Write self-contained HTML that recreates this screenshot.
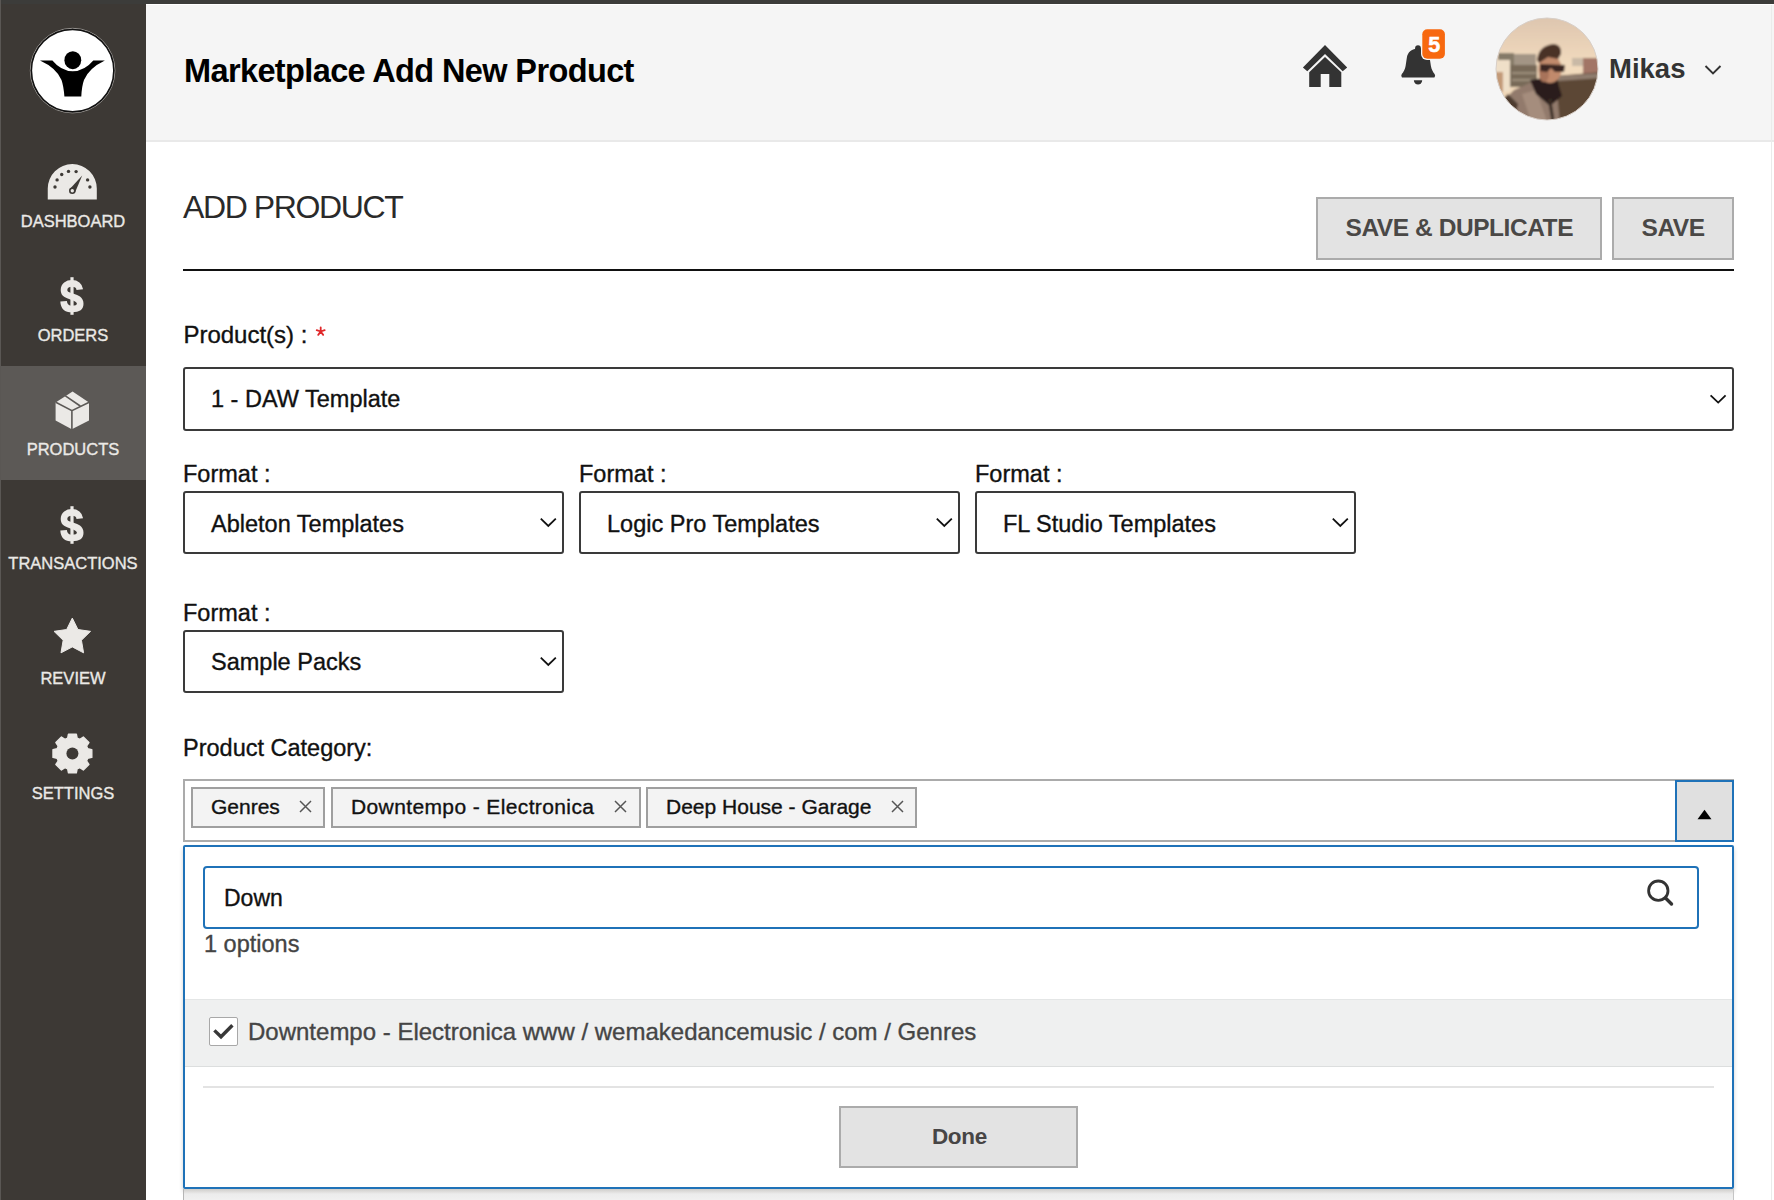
<!DOCTYPE html>
<html><head><meta charset="utf-8">
<style>
*{box-sizing:border-box;margin:0;padding:0}
html,body{width:1774px;height:1200px;overflow:hidden;background:#fff;font-family:"Liberation Sans",sans-serif;position:relative}
.a{position:absolute}
.t{position:absolute;white-space:nowrap;line-height:1;-webkit-text-stroke:0.35px currentColor}
#topbar{left:0;top:0;width:1774px;height:4px;background:#3c3c3a}
#side{left:0;top:4px;width:146px;height:1196px;background:#3d3935}
#sedge{left:0;top:0;width:1px;height:1200px;background:#5a5754}
#active{left:1px;top:366px;width:145px;height:114px;background:#5c5956}
#head{left:146px;top:5px;width:1628px;height:137px;background:#f5f5f5;border-bottom:2px solid #e9e9e9}
#redge{left:1771px;top:5px;width:1px;height:1195px;background:#ebebeb}
.nav{color:#ebe9e6;font-size:16.5px;left:0;width:146px;text-align:center}
.lbl{font-size:23.5px;color:#111}
.sel{border:2px solid #3a3a3a;border-radius:3px;background:#fff}
.btn{background:#e3e3e3;border:2px solid #ababab}
.btxt{-webkit-text-stroke:0 !important;font-weight:700;color:#4a4846;font-size:24.5px;letter-spacing:-0.44px}
.tag{background:#f3f3f3;border:2px solid #9f9f9f;top:787px;height:41px}
.tagt{font-size:21px;color:#111;top:795.8px}
.x{font-size:20px;color:#444}
</style></head>
<body>
<div id="topbar" class="a"></div>
<div id="side" class="a"></div>
<div id="sedge" class="a"></div>
<div id="active" class="a"></div>
<div id="head" class="a"></div>
<div id="redge" class="a"></div>

<!-- logo -->
<svg class="a" style="left:28px;top:26px" width="90" height="90" viewBox="0 0 90 90">
  <circle cx="44.6" cy="44.6" r="42.3" fill="none" stroke="#9a9794" stroke-width="1"/><circle cx="44.6" cy="44.6" r="41.2" fill="#fff" stroke="#111" stroke-width="1.5"/>
  <ellipse cx="44.8" cy="34.2" rx="8.4" ry="9" fill="#000"/>
  <path d="M12,34.5 L24.4,34.5 Q33,45 44.8,45.3 Q56.5,45 65.3,34.5 L76.9,34.5 Q61,42 56,54 Q53.8,60 53.3,70.5 L36.4,70.5 Q35.6,60 33.5,54 Q28.5,42 12,34.5 Z" fill="#000"/>
</svg>

<!-- nav labels -->
<div class="t nav" style="top:213px">DASHBOARD</div>
<div class="t nav" style="top:327px">ORDERS</div>
<div class="t nav" style="top:441px">PRODUCTS</div>
<div class="t nav" style="top:555px">TRANSACTIONS</div>
<div class="t nav" style="top:669.5px">REVIEW</div>
<div class="t nav" style="top:784.5px">SETTINGS</div>

<!-- header -->
<div class="t" style="left:184px;top:55.3px;font-size:32.5px;font-weight:700;letter-spacing:-0.62px;color:#000;-webkit-text-stroke:0">Marketplace Add New Product</div>
<div class="t" style="left:1609px;top:54.7px;font-size:27.5px;font-weight:700;color:#333;-webkit-text-stroke:0">Mikas</div>

<!-- page title -->
<div class="t" style="left:183px;top:190.8px;font-size:32px;letter-spacing:-1.4px;color:#2a2a2a;-webkit-text-stroke:0">ADD PRODUCT</div>
<div class="a" style="left:183px;top:269px;width:1551px;height:2px;background:#111"></div>

<div class="a btn" style="left:1316px;top:197px;width:286px;height:63px"></div>
<div class="t btxt" style="left:1345.5px;top:216.2px">SAVE &amp; DUPLICATE</div>
<div class="a btn" style="left:1612px;top:197px;width:122px;height:63px"></div>
<div class="t btxt" style="left:1641.5px;top:216.2px">SAVE</div>

<!-- products select -->
<div class="t lbl" style="left:183.4px;top:323px;font-size:24px">Product(s) :</div>
<div class="a sel" style="left:183px;top:367px;width:1551px;height:64px"></div>
<div class="t lbl" style="left:211px;top:388.3px">1 - DAW Template</div>

<!-- format row 1 -->
<div class="t lbl" style="left:183px;top:463.4px">Format :</div>
<div class="t lbl" style="left:579px;top:463.4px">Format :</div>
<div class="t lbl" style="left:975px;top:463.4px">Format :</div>
<div class="a sel" style="left:183px;top:491px;width:381px;height:63px"></div>
<div class="a sel" style="left:579px;top:491px;width:381px;height:63px"></div>
<div class="a sel" style="left:975px;top:491px;width:381px;height:63px"></div>
<div class="t lbl" style="left:211px;top:512.5px">Ableton Templates</div>
<div class="t lbl" style="left:607px;top:512.5px">Logic Pro Templates</div>
<div class="t lbl" style="left:1003px;top:512.5px">FL Studio Templates</div>

<!-- format row 2 -->
<div class="t lbl" style="left:183px;top:602px">Format :</div>
<div class="a sel" style="left:183px;top:630px;width:381px;height:63px"></div>
<div class="t lbl" style="left:211px;top:651.3px">Sample Packs</div>

<!-- category -->
<div class="t lbl" style="left:183px;top:737.3px">Product Category:</div>
<div class="a" style="left:183px;top:779px;width:1551px;height:63px;border:2px solid #ababab;background:#fff"></div>
<div class="a tag" style="left:190.5px;width:134px"></div>
<div class="t tagt" style="left:211px">Genres</div>
<div class="a tag" style="left:330.5px;width:310px"></div>
<div class="t tagt" style="left:351px;letter-spacing:0.38px">Downtempo - Electronica</div>
<div class="a tag" style="left:646px;width:270.5px"></div>
<div class="t tagt" style="left:666px">Deep House - Garage</div>
<svg class="a" style="left:299px;top:800px" width="13" height="13" viewBox="0 0 13 13"><path d="M1,1 L12,12 M12,1 L1,12" stroke="#555" stroke-width="1.45"/></svg>
<svg class="a" style="left:614px;top:800px" width="13" height="13" viewBox="0 0 13 13"><path d="M1,1 L12,12 M12,1 L1,12" stroke="#555" stroke-width="1.45"/></svg>
<svg class="a" style="left:891px;top:800px" width="13" height="13" viewBox="0 0 13 13"><path d="M1,1 L12,12 M12,1 L1,12" stroke="#555" stroke-width="1.45"/></svg>
<div class="a" style="left:1675px;top:779.5px;width:59px;height:62px;background:#e0e0e0;border:2px solid #1f72b8"></div>
<svg class="a" style="left:1696px;top:808px" width="17" height="12" viewBox="0 0 17 12"><path d="M1.5,11.2 L8.5,1.7 L15.5,11.2 Z" fill="#000"/></svg>

<!-- dropdown panel -->
<div class="a" style="left:183px;top:845px;width:1551px;height:344px;border:2px solid #1f72b8;border-radius:2px;background:#fff;box-shadow:0 3px 4px rgba(0,0,0,0.18)"></div>
<div class="a" style="left:203px;top:866px;width:1496px;height:63px;border:2px solid #1f72b8;border-radius:4px;background:#fff"></div>
<div class="t" style="left:224px;top:887px;font-size:23px;color:#111">Down</div>
<svg class="a" style="left:1640px;top:873px" width="40" height="40" viewBox="0 0 40 40"><circle cx="18.3" cy="17.7" r="9.7" fill="none" stroke="#333" stroke-width="2.8"/><path d="M25.5,25 L31.5,31" stroke="#333" stroke-width="3.4" stroke-linecap="round"/></svg>
<div class="t" style="left:204px;top:933.1px;font-size:23.5px;color:#444">1 options</div>
<div class="a" style="left:185px;top:999px;width:1547px;height:68px;background:#eff0f0;border-top:1px solid #e4e6e6;border-bottom:1px solid #dcdede"></div>
<div class="a" style="left:208.5px;top:1017px;width:29px;height:29px;background:#fff;border:1.5px solid #a8a8a8;border-radius:2px"></div>
<svg class="a" style="left:208px;top:1017px" width="30" height="30" viewBox="0 0 30 30"><path d="M6.4,13.4 L13,19.8 L24.4,8.2" fill="none" stroke="#383838" stroke-width="3.4"/></svg>
<div class="t" style="left:248px;top:1020px;font-size:24px;color:#454545">Downtempo - Electronica www / wemakedancemusic / com / Genres</div>
<div class="a" style="left:203px;top:1086px;width:1511px;height:2px;background:#e3e3e3"></div>
<div class="a btn" style="left:839px;top:1106px;width:239px;height:62px"></div>
<div class="t btxt" style="left:931.9px;top:1125.8px;font-size:22.5px;letter-spacing:-0.3px;color:#474545;-webkit-text-stroke:0.3px #474545">Done</div>

<!-- below panel -->
<div class="a" style="left:183px;top:1189px;width:1551px;height:11px;border-left:1.5px solid #b5b5b5;border-right:1.5px solid #c5c5c5;background:linear-gradient(#cfcdca,#ececec 5px,#f0f0f0)"></div>

<!-- icons overlay -->
<svg class="a" style="left:0;top:0" width="1774" height="1200" viewBox="0 0 1774 1200">
  <!-- dashboard gauge -->
  <g transform="translate(42,158)">
    <path d="M5.75,41.4 L5.75,30.6 A24.52,24.52 0 0 1 54.8,30.6 L54.8,41.4 Z" fill="#ebe9e6"/>
    <g fill="#3d3935">
      <circle cx="13" cy="29" r="1.7"/><circle cx="15.1" cy="21.9" r="1.7"/><circle cx="19.7" cy="16.5" r="1.7"/>
      <circle cx="26.5" cy="13.4" r="1.7"/><circle cx="34.1" cy="13.6" r="1.7"/><circle cx="45.6" cy="21.9" r="1.7"/><circle cx="47.9" cy="29" r="1.7"/>
      <path d="M27.6,31.2 L40.2,17.4 L33,34.6 Z"/>
      <circle cx="30.3" cy="32.8" r="3.3"/>
    </g>
    <circle cx="30.3" cy="32.8" r="1.7" fill="#ebe9e6"/>
  </g>
  <!-- dollar orders / transactions -->
  <g transform="translate(52,272)"><path d="M20,5.2 L20,42.8" stroke="#ebe9e6" stroke-width="3.2"/><path d="M27.8,17.6 C27.4,13.6 24.4,11.4 20,11.4 C15.3,11.4 12,13.8 12,17.9 C12,22.2 15.6,23.3 20,24.6 C25,26.1 28.2,27.6 28.2,31.8 C28.2,35.8 24.7,37 20,37 C15,37 11.9,34.8 11.6,29.2" fill="none" stroke="#ebe9e6" stroke-width="6.6"/></g>
  <g transform="translate(52,501)"><path d="M20,5.2 L20,42.8" stroke="#ebe9e6" stroke-width="3.2"/><path d="M27.8,17.6 C27.4,13.6 24.4,11.4 20,11.4 C15.3,11.4 12,13.8 12,17.9 C12,22.2 15.6,23.3 20,24.6 C25,26.1 28.2,27.6 28.2,31.8 C28.2,35.8 24.7,37 20,37 C15,37 11.9,34.8 11.6,29.2" fill="none" stroke="#ebe9e6" stroke-width="6.6"/></g>
  <!-- box -->
  <g transform="translate(50,386)">
    <path d="M22.6,5.6 L39,16.6 L39,34.4 L21.8,43.2 L5.6,34.4 L5.6,16.4 Z" fill="#ebe9e6"/>
    <path d="M5.8,16.2 L21.9,24.6 L39.2,16.3 M21.9,24.6 L21.9,44 M15.4,9.8 L30.2,20" fill="none" stroke="#5c5956" stroke-width="1.6"/>
  </g>
  <!-- star -->
  <path d="M72.30,618.10 L77.94,629.53 L90.56,631.37 L81.43,640.27 L83.59,652.83 L72.30,646.90 L61.01,652.83 L63.17,640.27 L54.04,631.37 L66.66,629.53Z" fill="#ebe9e6" stroke="#ebe9e6" stroke-width="1" stroke-linejoin="round"/>
  <!-- gear -->
  <path d="M87.69,748.77 L91.81,749.57 L91.81,757.43 L87.69,758.23 L86.55,760.96 L88.90,764.44 L83.34,770.00 L79.86,767.65 L77.13,768.79 L76.33,772.91 L68.47,772.91 L67.67,768.79 L64.94,767.65 L61.46,770.00 L55.90,764.44 L58.25,760.96 L57.11,758.23 L52.99,757.43 L52.99,749.57 L57.11,748.77 L58.25,746.04 L55.90,742.56 L61.46,737.00 L64.94,739.35 L67.67,738.21 L68.47,734.09 L76.33,734.09 L77.13,738.21 L79.86,739.35 L83.34,737.00 L88.90,742.56 L86.55,746.04Z" fill="#ebe9e6" stroke="#ebe9e6" stroke-width="1.4" stroke-linejoin="round"/>
  <circle cx="72.4" cy="753.5" r="6" fill="#3d3935"/>

  <!-- home -->
  <path d="M1325,45.1 L1347.2,67.4 L1342.7,71.3 L1325,54 L1307.3,71.3 L1302.9,67.4 Z" fill="#333"/>
  <path d="M1325,56.9 L1341.3,72.2 L1341.3,87.1 L1329.3,87.1 L1329.3,74.1 L1320.7,74.1 L1320.7,87.1 L1309.2,87.1 L1309.2,72.2 Z" fill="#333"/>
  <!-- bell -->
  <circle cx="1418" cy="48.2" r="2.9" fill="#333"/>
  <path d="M1418,48.6 C1412,48.6 1407.6,52 1406.8,58 L1405.6,66 C1405,69.5 1403.5,72 1401.8,74 Q1400.6,75.8 1402,77.6 L1434.4,77.6 Q1435.8,75.8 1434.6,74 C1433,72 1431.5,69.5 1430.9,66 L1429.7,58 C1429,52 1424.4,48.6 1418,48.6 Z" fill="#333"/>
  <path d="M1413.9,80.2 L1422.2,80.2 A4.15,4.3 0 0 1 1413.9,80.2 Z" fill="#333"/>
  <rect x="1421" y="28" width="25" height="32" rx="6" fill="#f5f5f5"/>
  <rect x="1422.3" y="29.2" width="22.6" height="29.6" rx="5" fill="#f7680f"/>
  <text x="1434.2" y="51.8" text-anchor="middle" font-family="Liberation Sans" font-weight="700" font-size="21.5" fill="#fff" stroke="#fff" stroke-width="0.5">5</text>
  <!-- user chevron -->
  <path d="M1705.5,66 L1713,73.5 L1720.5,66" fill="none" stroke="#333" stroke-width="1.9"/>
  <!-- asterisk -->
  <path d="M320.70,331.50 L320.70,327.30 M320.70,331.50 L324.69,330.20 M320.70,331.50 L323.17,334.90 M320.70,331.50 L318.23,334.90 M320.70,331.50 L316.71,330.20" stroke="#e0282a" stroke-width="1.8" stroke-linecap="round"/>
  <!-- select chevrons -->
  <g fill="none" stroke="#111" stroke-width="1.8">
    <path d="M1710.6,395.3 L1718.2,402.6 L1725.6,395.3"/>
    <path d="M540.8,518.6 L548.3,525.9 L555.8,518.6"/>
    <path d="M936.8,518.6 L944.3,525.9 L951.8,518.6"/>
    <path d="M1332.8,518.6 L1340.3,525.9 L1347.8,518.6"/>
    <path d="M540.8,657.6 L548.3,664.9 L555.8,657.6"/>
  </g>
  <!-- avatar -->
  <defs>
    <clipPath id="av"><circle cx="1547" cy="69" r="51"/></clipPath>
    <filter id="bl" x="-10%" y="-10%" width="120%" height="120%"><feGaussianBlur stdDeviation="1.3"/></filter>
    <linearGradient id="sky" x1="0" y1="0" x2="0" y2="1"><stop offset="0" stop-color="#dcc4ae"/><stop offset="0.45" stop-color="#f1dabd"/><stop offset="1" stop-color="#f0d6b4"/></linearGradient>
  </defs>
  <g clip-path="url(#av)">
    <g transform="translate(1492,14)" filter="url(#bl)">
      <rect x="0" y="0" width="110" height="110" fill="url(#sky)"/>
      <rect x="6" y="39" width="16" height="12" fill="#857a68"/>
      <rect x="22" y="40" width="22" height="12" fill="#a39585"/>
      <rect x="3" y="46" width="15" height="31" fill="#efdfc8"/>
      <rect x="3" y="58" width="8" height="20" fill="#c39a78"/>
      <rect x="18" y="51" width="27" height="22" fill="#786a58"/>
      <rect x="20" y="58" width="24" height="2" fill="#9c8e7c"/>
      <rect x="20" y="65" width="24" height="2" fill="#9c8e7c"/>
      <rect x="80" y="44" width="12" height="8" fill="#c9b9a6"/>
      <rect x="91" y="44" width="17" height="22" fill="#a27566"/>
      <path d="M64,62 L110,58 L110,110 L64,110 Z" fill="#5b4636"/>
      <path d="M66,62 L110,59 L110,64 L66,67 Z" fill="#8f7d6e"/>
      <path d="M6,92 L22,76 L40,68 L64,66 L68,110 L10,110 Z" fill="#927a6c"/>
      <path d="M30,80 L44,76 L56,110 L40,110 Z" fill="#a58d7d"/>
      <path d="M6,90 L16,80 L26,90 L22,106 L8,104 Z" fill="#4e3a2e"/>
      <path d="M38,66 L64,62 L70,82 L58,92 L44,80 Z" fill="#2a1f1a"/>
      <ellipse cx="58" cy="55" rx="11.5" ry="14" fill="#c18a6c"/>
      <ellipse cx="52" cy="60" rx="5" ry="8" fill="#a8735a"/>
      <path d="M45,46 Q47,31 62,30 Q70,31 69,40 L66,45 L56,43 L47,49 Z" fill="#4a3026"/>
      <path d="M48,50 L73,51 L72,58 L63,58 L59,54 L55,58 L48,57 Z" fill="#3a2520"/>
      <path d="M56,86 L60,110 L63,110 L59,84 Z" fill="#3a2e26"/>
    </g>
  </g>
  <circle cx="1547" cy="69" r="51" fill="none" stroke="#d8cfc8" stroke-width="1"/>
</svg>
</body></html>
